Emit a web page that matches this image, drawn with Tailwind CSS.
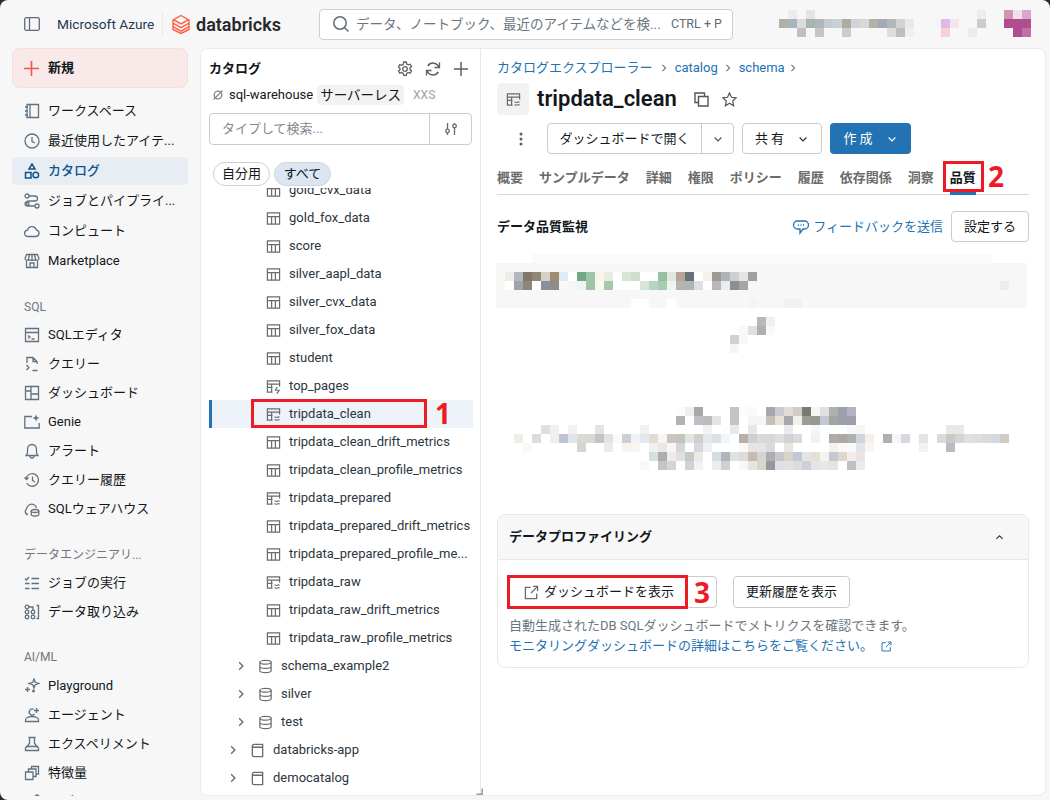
<!DOCTYPE html>
<html lang="ja">
<head>
<meta charset="UTF-8">
<title>tripdata_clean - Databricks</title>
<script src="https://cdn.jsdelivr.net/npm/@tailwindcss/browser@4"></script>
</head>
<body class="bg-[#2a2a2a] overflow-hidden font-['Roboto','Noto_Sans_CJK_JP',sans-serif] text-[13px] text-[#11171c]">
<svg class="hidden">
  <symbol id="tbl" viewBox="0 0 16 16"><path d="M1.500 2h13v12h-13zM1.500 6h13M6 6v8M10 6v8" fill="none" stroke="currentColor" stroke-width="1.300"/></symbol>
  <symbol id="mon" viewBox="0 0 16 16"><path d="M7 14H1.500V2h13v6M1.500 5.500h13M1.500 9H7M6 5.500V14" fill="none" stroke="currentColor" stroke-width="1.300"/><path d="M9 11c1-1 2 .8 3 0s1.500-.8 2.500 0M9 14c1-1 2 .8 3 0s1.500-.8 2.500 0" fill="none" stroke="currentColor" stroke-width="1.100"/></symbol>
  <symbol id="sch" viewBox="0 0 16 16"><ellipse cx="8" cy="3.500" rx="6" ry="2" fill="none" stroke="currentColor" stroke-width="1.300"/><path d="M2 3.500v9c0 1.100 2.700 2 6 2s6-.9 6-2v-9M2 8c0 1.100 2.700 2 6 2s6-.9 6-2" fill="none" stroke="currentColor" stroke-width="1.300"/></symbol>
  <symbol id="cat" viewBox="0 0 16 16"><path d="M2.500 3.500c0-1 .8-2 2-2h9v13h-9c-1.200 0-2-.8-2-2zM2.500 4.500h11" fill="none" stroke="currentColor" stroke-width="1.400"/></symbol>
  <symbol id="chev" viewBox="0 0 16 16"><path d="M5.500 3l5 5-5 5" fill="none" stroke="currentColor" stroke-width="1.800"/></symbol>
  <symbol id="down" viewBox="0 0 16 16"><path d="M3.500 6l4.500 4.500L12.500 6" fill="none" stroke="currentColor" stroke-width="1.600"/></symbol>
  <symbol id="ext" viewBox="0 0 16 16"><path d="M7 2.500H1.500v12h12V9M9.500 1.500h5v5M14.500 1.500L7.500 8.500" fill="none" stroke="currentColor" stroke-width="1.400"/></symbol>
</svg>

<div class="relative w-[1050px] h-[800px] bg-[#f7f7f7] rounded-t-[8px] rounded-bl-[8px] overflow-hidden">
  <!-- header -->
  <header class="h-12 flex items-center pl-6">
    <svg class="w-4 h-4 text-[#5f6b75]" viewBox="0 0 16 16" fill="none" stroke="currentColor" stroke-width="1.300"><rect x=".7" y="1.700" width="14.600" height="12.600" rx="1.500"/><path d="M5.500 1.700v12.600"/></svg>
    <span class="ml-[17px] w-[97px] text-[13.700px] text-[#1f3a52] whitespace-nowrap">Microsoft Azure</span>
    <div class="ml-2 w-px h-6 bg-[#e8e8e8]"></div>
    <svg class="ml-[9px] w-[18px] h-5" viewBox="0 0 18 20" fill="none" stroke="#ff5f46" stroke-width="1.400"><path d="M9 1.500l7.500 4.200L9 9.900 1.500 5.700zM1 9.200l8 4.500 8-4.500M1 12.700l8 4.500 8-4.500M1 6v9.500l8 4 8-4V6"/></svg>
    <span class="ml-[6px] w-[123px] text-[18px] font-semibold text-[#25282b]">databricks</span>
    <div class="w-[414px] h-[31px] bg-white border border-[#cfcfcf] rounded-[4px] flex items-center pl-3 pr-[10px]">
      <svg class="w-[18px] h-[18px] text-[#5f6b75]" viewBox="0 0 18 18" fill="none" stroke="currentColor" stroke-width="1.500"><circle cx="8" cy="8" r="6.200"/><path d="M12.500 12.500l4 4"/></svg>
      <span class="ml-[6px] text-[13.500px] text-[#6b7680]">データ、ノートブック、最近のアイテムなどを検...</span>
      <span class="ml-auto text-[12.500px] text-[#5f6b75]">CTRL + P</span>
    </div>
    <svg id="topBlur" class="ml-auto w-[271px] h-12" viewBox="0 0 271 48"></svg>
  </header>

  <div class="flex h-[748px]">
    <!-- sidebar -->
    <nav class="w-[200px] shrink-0 pl-3 pr-3 overflow-hidden">
      <div class="h-10 flex items-center gap-[9px] pl-[11px] bg-[#fae9e9] border border-[#f9dcdc] rounded-lg font-bold text-[13px]">
        <svg class="w-[15px] h-[15px]" viewBox="0 0 15 15" stroke="#f4534f" stroke-width="1.600"><path d="M7.500 0v15M0 7.500h15"/></svg>
        新規
      </div>
      <div class="mt-[9px] flex flex-col gap-[2px]">
        <a class="h-7 flex items-center gap-2 pl-3 rounded">
          <svg class="w-4 h-4 shrink-0 text-[#5f7281]" viewBox="0 0 16 16" fill="none" stroke="currentColor" stroke-width="1.300"><path d="M3 1.500h11.500v13H3zM6 1.500v13M1 4h3M1 8h3M1 12h3"/></svg>
          <span>ワークスペース</span>
        </a>
        <a class="h-7 flex items-center gap-2 pl-3 rounded">
          <svg class="w-4 h-4 shrink-0 text-[#5f7281]" viewBox="0 0 16 16" fill="none" stroke="currentColor" stroke-width="1.300"><circle cx="8" cy="8" r="7"/><path d="M8 4v4.500l3 1.500"/></svg>
          <span class="truncate">最近使用したアイテ...</span>
        </a>
        <a class="h-7 flex items-center gap-2 pl-3 rounded bg-[#e8edf4] text-[#0e538b] font-medium">
          <svg class="w-4 h-4 shrink-0" viewBox="0 0 16 16" fill="none" stroke="currentColor" stroke-width="1.500"><path d="M8 1l3 5H5zM1.500 9.500h5.500v5.500H1.500z"/><circle cx="11.800" cy="12" r="2.800"/></svg>
          <span>カタログ</span>
        </a>
        <a class="h-7 flex items-center gap-2 pl-3 rounded">
          <svg class="w-4 h-4 shrink-0 text-[#5f7281]" viewBox="0 0 16 16" fill="none" stroke="currentColor" stroke-width="1.300"><circle cx="3" cy="3" r="2"/><circle cx="13" cy="13" r="2"/><circle cx="3" cy="11" r="2"/><path d="M5 3h6a2.500 2.500 0 0 1 0 5H5a2.500 2.500 0 0 0 0 5h6"/></svg>
          <span class="truncate">ジョブとパイプライ...</span>
        </a>
        <a class="h-7 flex items-center gap-2 pl-3 rounded">
          <svg class="w-4 h-4 shrink-0 text-[#5f7281]" viewBox="0 0 16 16" fill="none" stroke="currentColor" stroke-width="1.300"><path d="M4 13.500a3.200 3.200 0 0 1-.4-6.400 4.500 4.500 0 0 1 8.700-.3 3.400 3.400 0 0 1-.3 6.700z"/></svg>
          <span>コンピュート</span>
        </a>
        <a class="h-7 flex items-center gap-2 pl-3 rounded">
          <svg class="w-4 h-4 shrink-0 text-[#5f7281]" viewBox="0 0 16 16" fill="none" stroke="currentColor" stroke-width="1.300"><path d="M2.500 1.500h11l1.500 4a2 2 0 0 1-3.500 1 2.300 2.300 0 0 1-3.500 0 2.300 2.300 0 0 1-3.500 0A2 2 0 0 1 1 5.500zM2.500 8v6.500h11V8M6 14.500V10h4v4.500M5.500 1.500L4.500 6M10.500 1.500l1 4.500M8 1.500V6"/></svg>
          <span>Marketplace</span>
        </a>
      </div>

      <div class="mt-[21px] h-[22px] flex items-center pl-3 text-[12px] text-[#6b7680]">SQL</div>
      <div class="mt-[3px] flex flex-col gap-px">
        <a class="h-7 flex items-center gap-2 pl-3">
          <svg class="w-4 h-4 shrink-0 text-[#5f7281]" viewBox="0 0 16 16" fill="none" stroke="currentColor" stroke-width="1.300"><path d="M1.500 1.500h13v13h-13zM1.500 5.500h13M4 8.500l2 1.500-2 1.500M7.500 12h3"/></svg>
          <span>SQLエディタ</span>
        </a>
        <a class="h-7 flex items-center gap-2 pl-3">
          <svg class="w-4 h-4 shrink-0 text-[#5f7281]" viewBox="0 0 16 16" fill="none" stroke="currentColor" stroke-width="1.300"><path d="M3 7V1.500h6l4 4V8M9 1.500v4h4M2.500 9l2.500 2.500L2.500 14M8.500 14.500h5"/></svg>
          <span>クエリー</span>
        </a>
        <a class="h-7 flex items-center gap-2 pl-3">
          <svg class="w-4 h-4 shrink-0 text-[#5f7281]" viewBox="0 0 16 16" fill="none" stroke="currentColor" stroke-width="1.300"><path d="M1.500 1.500h13v13h-13zM7 1.500v13M7 9h7.500M1.500 6h5.500"/></svg>
          <span>ダッシュボード</span>
        </a>
        <a class="h-7 flex items-center gap-2 pl-3">
          <svg class="w-4 h-4 shrink-0 text-[#5f7281]" viewBox="0 0 16 16" fill="none" stroke="currentColor" stroke-width="1.300"><path d="M8 2.500H.8v11.500h14.400V9"/><path d="M12 .5l1 2.500 2.500 1L13 5l-1 2.500L11 5 8.500 4 11 3z" fill="currentColor" stroke="none"/></svg>
          <span>Genie</span>
        </a>
        <a class="h-7 flex items-center gap-2 pl-3">
          <svg class="w-4 h-4 shrink-0 text-[#5f7281]" viewBox="0 0 16 16" fill="none" stroke="currentColor" stroke-width="1.300"><path d="M2 12.500h12l-1.500-2.500V6a4.500 4.500 0 0 0-9 0v4zM6 12.500v.5a2 2 0 0 0 4 0v-.5"/></svg>
          <span>アラート</span>
        </a>
        <a class="h-7 flex items-center gap-2 pl-3">
          <svg class="w-4 h-4 shrink-0 text-[#5f7281]" viewBox="0 0 16 16" fill="none" stroke="currentColor" stroke-width="1.300"><path d="M2.200 6a6.300 6.300 0 1 1 .5 5M.5 5.500l2 2 2-2M8.500 4.500v4l2.500 1.500"/></svg>
          <span>クエリー履歴</span>
        </a>
        <a class="h-7 flex items-center gap-2 pl-3">
          <svg class="w-4 h-4 shrink-0 text-[#5f7281]" viewBox="0 0 16 16" fill="none" stroke="currentColor" stroke-width="1.300"><path d="M4 13.500C1 13.500.5 10 2.500 8c.5-4 4.500-6 8-4 1.300.8 1.800 2 2 3"/><ellipse cx="11" cy="10" rx="3.800" ry="1.500"/><path d="M7.200 10v3.500c0 .8 1.700 1.500 3.800 1.500s3.800-.7 3.800-1.500V10"/></svg>
          <span>SQLウェアハウス</span>
        </a>
      </div>

      <div class="mt-[21px] h-[22px] flex items-center pl-3 text-[12px] text-[#6b7680]">データエンジニアリ...</div>
      <div class="mt-[3px] flex flex-col gap-px">
        <a class="h-7 flex items-center gap-2 pl-3">
          <svg class="w-4 h-4 shrink-0 text-[#5f7281]" viewBox="0 0 16 16" fill="none" stroke="currentColor" stroke-width="1.300"><path d="M1 3.500l1.500 1.500L5 2M7.500 3.500h7.500M1 8.500h4.500M7.500 8.500h7.500M1 13.500h4.500M7.500 13.500h7.500"/></svg>
          <span>ジョブの実行</span>
        </a>
        <a class="h-7 flex items-center gap-2 pl-3">
          <svg class="w-4 h-4 shrink-0 text-[#5f7281]" viewBox="0 0 16 16" fill="none" stroke="currentColor" stroke-width="1.300"><circle cx="3" cy="3" r="1.800"/><circle cx="3" cy="8" r="1.800"/><circle cx="3" cy="13" r="1.800"/><circle cx="9" cy="8" r="1.800"/><circle cx="9" cy="13" r="1.800"/><path d="M5 3h4v3M12.500 1.500h2v13h-2"/></svg>
          <span>データ取り込み</span>
        </a>
      </div>

      <div class="mt-[20px] h-[22px] flex items-center pl-3 text-[12px] text-[#6b7680]">AI/ML</div>
      <div class="mt-[4px] flex flex-col gap-px">
        <a class="h-7 flex items-center gap-2 pl-3">
          <svg class="w-4 h-4 shrink-0 text-[#5f7281]" viewBox="0 0 16 16" fill="none" stroke="currentColor" stroke-width="1.300"><path d="M10 1l1.200 3.300L15 5.500l-3.800 1.200L10 10 8.800 6.700 5 5.500l3.800-1.200z"/><path d="M3.500 9v5M1 11.500h5M8 13h3M9.500 11.500v3"/></svg>
          <span>Playground</span>
        </a>
        <a class="h-7 flex items-center gap-2 pl-3">
          <svg class="w-4 h-4 shrink-0 text-[#5f7281]" viewBox="0 0 16 16" fill="none" stroke="currentColor" stroke-width="1.300"><path d="M1.500 14.500v-1.500c0-2 3-3.500 6.500-3.500s6.500 1.500 6.500 3.500v1.500zM9.500 2.300A3 3 0 1 0 10.500 7"/><path d="M12.500 1v5M10 3.500h5"/></svg>
          <span>エージェント</span>
        </a>
        <a class="h-7 flex items-center gap-2 pl-3">
          <svg class="w-4 h-4 shrink-0 text-[#5f7281]" viewBox="0 0 16 16" fill="none" stroke="currentColor" stroke-width="1.300"><path d="M4.500 1.500h7M5.500 1.500v6L1.500 12v2.500h13V12l-4-4.500v-6M3 10.500h10"/></svg>
          <span>エクスペリメント</span>
        </a>
        <a class="h-7 flex items-center gap-2 pl-3">
          <svg class="w-4 h-4 shrink-0 text-[#5f7281]" viewBox="0 0 16 16" fill="none" stroke="currentColor" stroke-width="1.300"><path d="M1.500 7h7.500v7.500H1.500zM4.500 7V4h7.500v7.500H9M7.500 4V1.500h7V9H12"/></svg>
          <span>特徴量</span>
        </a>
        <a class="h-7 flex items-center gap-2 pl-3">
          <svg class="w-4 h-4 shrink-0 text-[#5f7281]" viewBox="0 0 16 16" fill="none" stroke="currentColor" stroke-width="1.300"><circle cx="3" cy="8" r="2"/><circle cx="13" cy="3" r="2"/><circle cx="13" cy="13" r="2"/><path d="M5 7l6-3M5 9l6 3"/></svg>
          <span>モデル</span>
        </a>
      </div>
    </nav>

    <!-- panel -->
    <div class="w-[846px] h-[748px] bg-white border border-[#ebebeb] rounded-lg flex overflow-hidden relative">
      <!-- catalog tree -->
      <section class="w-[280px] shrink-0 border-r border-[#e8e8e8] flex flex-col">
        <div class="px-2 pt-[6px] h-[27px] flex items-center justify-between box-content">
          <h2 class="font-bold text-[13px]">カタログ</h2>
          <div class="flex items-center gap-[12px] pr-[3px] text-[#5f5f5f]">
            <svg class="w-4 h-4" viewBox="0 0 16 16" fill="none" stroke="currentColor" stroke-width="1.300"><circle cx="8" cy="8" r="2.300"/><path d="M6.700 1h2.600l.4 2 1.600.9 1.900-.7 1.300 2.300-1.500 1.300v1.800l1.500 1.300-1.300 2.300-1.900-.7-1.600.9-.4 2H6.700l-.4-2-1.600-.9-1.900.7-1.300-2.300 1.500-1.300V7.200L1.500 5.900l1.300-2.300 1.900.7 1.600-.9z"/></svg>
            <svg class="w-4 h-4" viewBox="0 0 16 16" fill="none" stroke="currentColor" stroke-width="1.500"><path d="M14 6.500A6.200 6.200 0 0 0 2.800 5M2 9.500A6.200 6.200 0 0 0 13.200 11"/><path d="M14.500 1.500v5h-5M1.500 14.500v-5h5" stroke-width="1.300"/></svg>
            <svg class="w-4 h-4" viewBox="0 0 16 16" stroke="currentColor" stroke-width="1.500"><path d="M8 1v14M1 8h14"/></svg>
          </div>
        </div>
        <div class="mt-[3px] pl-3 h-[20px] flex items-center text-[13px]">
          <svg class="w-[10px] h-[10px] text-[#7b8690]" viewBox="0 0 10 10" fill="none" stroke="currentColor" stroke-width="1.300"><circle cx="5" cy="5" r="3.800"/><path d="M.5 9.500l9-9"/></svg>
          <span class="ml-[6px]">sql-warehouse</span>
          <span class="ml-1 h-5 px-[3px] flex items-center bg-[#f2f2f2] rounded text-[13.500px]">サーバーレス</span>
          <span class="ml-[9px] text-[12px] text-[#9aa3aa]">XXS</span>
        </div>
        <div class="mt-2 mx-2 h-8 border border-[#cbcbcb] rounded-[4px] flex items-center">
          <span class="pl-3 flex-1 text-[13px] text-[#7f8a93]">タイプして検索...</span>
          <div class="w-[42px] h-full border-l border-[#cbcbcb] flex items-center justify-center">
            <svg class="w-[14px] h-[14px] text-[#5f6b75]" viewBox="0 0 14 14" fill="none" stroke="currentColor" stroke-width="1.300"><path d="M3.500 1v6M3.500 11v2M10.500 1v1M10.500 6v7"/><circle cx="3.500" cy="9" r="1.800"/><circle cx="10.500" cy="4" r="1.800"/></svg>
          </div>
        </div>
        <div class="mt-[17px] pl-3 flex gap-1">
          <span class="w-[57px] h-6 flex items-center justify-center border border-[#cfcfcf] rounded-full">自分用</span>
          <span class="w-[57px] h-6 flex items-center justify-center border border-[#cfd6de] bg-[#dbe6f2] rounded-full">すべて</span>
        </div>
        <div class="mt-[2px] flex-1 overflow-hidden text-[#2c3640]">
          <div class="mt-[-12px] [&_svg]:shrink-0">
            <div class="h-7 flex items-center pl-[65px] gap-2"><svg class="w-[15px] h-[15px] text-[#6b6b6b]"><use href="#tbl"/></svg>gold_cvx_data</div>
            <div class="h-7 flex items-center pl-[65px] gap-2"><svg class="w-[15px] h-[15px] text-[#6b6b6b]"><use href="#tbl"/></svg>gold_fox_data</div>
            <div class="h-7 flex items-center pl-[65px] gap-2"><svg class="w-[15px] h-[15px] text-[#6b6b6b]"><use href="#tbl"/></svg>score</div>
            <div class="h-7 flex items-center pl-[65px] gap-2"><svg class="w-[15px] h-[15px] text-[#6b6b6b]"><use href="#tbl"/></svg>silver_aapl_data</div>
            <div class="h-7 flex items-center pl-[65px] gap-2"><svg class="w-[15px] h-[15px] text-[#6b6b6b]"><use href="#tbl"/></svg>silver_cvx_data</div>
            <div class="h-7 flex items-center pl-[65px] gap-2"><svg class="w-[15px] h-[15px] text-[#6b6b6b]"><use href="#tbl"/></svg>silver_fox_data</div>
            <div class="h-7 flex items-center pl-[65px] gap-2"><svg class="w-[15px] h-[15px] text-[#6b6b6b]"><use href="#tbl"/></svg>student</div>
            <div class="h-7 flex items-center pl-[65px] gap-2"><svg class="w-[15px] h-[15px] text-[#6b6b6b]" viewBox="0 0 16 16" fill="none" stroke="currentColor" stroke-width="1.300"><path d="M7 14H1.500V2h13v6M1.500 5.500h13M1.500 9H7M6 5.500V14M12 8.500L10 12h4l-2.500 3.500"/></svg>top_pages</div>
            <div class="h-7 ml-2 mr-[7px] bg-[#eef3f9] border-l-[3px] border-[#2272b4] flex items-center pl-[54px] gap-2"><svg class="w-[15px] h-[15px] text-[#6b6b6b]"><use href="#mon"/></svg>tripdata_clean</div>
            <div class="h-7 flex items-center pl-[65px] gap-2"><svg class="w-[15px] h-[15px] text-[#6b6b6b]"><use href="#tbl"/></svg>tripdata_clean_drift_metrics</div>
            <div class="h-7 flex items-center pl-[65px] gap-2"><svg class="w-[15px] h-[15px] text-[#6b6b6b]"><use href="#tbl"/></svg>tripdata_clean_profile_metrics</div>
            <div class="h-7 flex items-center pl-[65px] gap-2"><svg class="w-[15px] h-[15px] text-[#6b6b6b]"><use href="#mon"/></svg>tripdata_prepared</div>
            <div class="h-7 flex items-center pl-[65px] gap-2"><svg class="w-[15px] h-[15px] text-[#6b6b6b]"><use href="#tbl"/></svg>tripdata_prepared_drift_metrics</div>
            <div class="h-7 flex items-center pl-[65px] gap-2"><svg class="w-[15px] h-[15px] text-[#6b6b6b]"><use href="#tbl"/></svg>tripdata_prepared_profile_me...</div>
            <div class="h-7 flex items-center pl-[65px] gap-2"><svg class="w-[15px] h-[15px] text-[#6b6b6b]"><use href="#mon"/></svg>tripdata_raw</div>
            <div class="h-7 flex items-center pl-[65px] gap-2"><svg class="w-[15px] h-[15px] text-[#6b6b6b]"><use href="#tbl"/></svg>tripdata_raw_drift_metrics</div>
            <div class="h-7 flex items-center pl-[65px] gap-2"><svg class="w-[15px] h-[15px] text-[#6b6b6b]"><use href="#tbl"/></svg>tripdata_raw_profile_metrics</div>
            <div class="h-7 flex items-center pl-[34px]"><svg class="w-3 h-3 text-[#6b6b6b]"><use href="#chev"/></svg><svg class="ml-[11px] w-[15px] h-[15px] text-[#6b6b6b]"><use href="#sch"/></svg><span class="ml-2">schema_example2</span></div>
            <div class="h-7 flex items-center pl-[34px]"><svg class="w-3 h-3 text-[#6b6b6b]"><use href="#chev"/></svg><svg class="ml-[11px] w-[15px] h-[15px] text-[#6b6b6b]"><use href="#sch"/></svg><span class="ml-2">silver</span></div>
            <div class="h-7 flex items-center pl-[34px]"><svg class="w-3 h-3 text-[#6b6b6b]"><use href="#chev"/></svg><svg class="ml-[11px] w-[15px] h-[15px] text-[#6b6b6b]"><use href="#sch"/></svg><span class="ml-2">test</span></div>
            <div class="h-7 flex items-center pl-[26px]"><svg class="w-3 h-3 text-[#6b6b6b]"><use href="#chev"/></svg><svg class="ml-[11px] w-[15px] h-[15px] text-[#6b6b6b]"><use href="#cat"/></svg><span class="ml-2">databricks-app</span></div>
            <div class="h-7 flex items-center pl-[26px]"><svg class="w-3 h-3 text-[#6b6b6b]"><use href="#chev"/></svg><svg class="ml-[11px] w-[15px] h-[15px] text-[#6b6b6b]"><use href="#cat"/></svg><span class="ml-2">democatalog</span></div>
          </div>
        </div>
      </section>

      <!-- detail -->
      <main class="flex-1 px-4 pt-[9px] min-w-0">
        <div class="h-5 flex items-center text-[13px] text-[#2272b4]">
          カタログエクスプローラー
          <svg class="mx-[6px] w-[10px] h-[10px] text-[#6b7680]"><use href="#chev"/></svg><span class="w-[42px] whitespace-nowrap">catalog</span>
          <svg class="mx-[6px] w-[10px] h-[10px] text-[#6b7680]"><use href="#chev"/></svg><span class="w-[43px] whitespace-nowrap">schema</span>
          <svg class="ml-[6px] w-[10px] h-[10px] text-[#6b7680]"><use href="#chev"/></svg>
        </div>
        <div class="mt-[5px] h-8 flex items-center">
          <div class="w-8 h-8 bg-[#f2f2f2] rounded flex items-center justify-center"><svg class="w-[15px] h-[15px] text-[#6b6b6b]"><use href="#mon"/></svg></div>
          <h1 class="ml-2 text-[22px] font-semibold leading-none">tripdata_clean</h1>
          <svg class="ml-[17px] w-[15px] h-[15px] text-[#555]" viewBox="0 0 15 15" fill="none" stroke="currentColor" stroke-width="1.400"><path d="M4.500 4.500h9.500v9.500H4.500zM4.500 10.500H1V1h9.500v3.500"/></svg>
          <svg class="ml-[13px] w-[15px] h-[15px] text-[#555]" viewBox="0 0 16 16" fill="none" stroke="currentColor" stroke-width="1.300"><path d="M8 1l2.100 4.600 5 .6-3.700 3.400 1 5L8 11.900l-4.400 2.700 1-5L.9 6.200l5-.6z"/></svg>
        </div>
        <div class="mt-[8px] h-[31px] flex items-center">
          <svg class="ml-[22px] w-1 h-[14px] text-[#5f5f5f]" viewBox="0 0 4 14" fill="currentColor"><circle cx="2" cy="2" r="1.500"/><circle cx="2" cy="7" r="1.500"/><circle cx="2" cy="12" r="1.500"/></svg>
          <div class="ml-6 w-[187px] h-full border border-[#cbcbcb] rounded-[4px] flex">
            <span class="flex-1 flex items-center justify-center">ダッシュボードで開く</span>
            <span class="w-[32px] border-l border-[#cbcbcb] flex items-center justify-center"><svg class="w-3 h-3 text-[#555]"><use href="#down"/></svg></span>
          </div>
          <div class="ml-2 w-[80px] h-full border border-[#cbcbcb] rounded-[4px] flex items-center justify-center gap-[13px]">
            共 有<svg class="w-3 h-3 text-[#333]"><use href="#down"/></svg>
          </div>
          <div class="ml-2 w-[81px] h-full bg-[#2272b4] text-white rounded-[4px] flex items-center justify-center gap-[13px]">
            作 成<svg class="w-3 h-3"><use href="#down"/></svg>
          </div>
        </div>
        <div class="mt-[9px] h-[32px] border-b border-[#d8d8d8] flex gap-4 text-[13px] font-semibold text-[#6b6b6b]">
          <span class="pt-[5px]">概要</span>
          <span class="pt-[5px]">サンプルデータ</span>
          <span class="pt-[5px]">詳細</span>
          <span class="pt-[5px]">権限</span>
          <span class="pt-[5px]">ポリシー</span>
          <span class="pt-[5px]">履歴</span>
          <span class="pt-[5px]">依存関係</span>
          <span class="pt-[5px]">洞察</span>
          <span class="pt-[5px] h-[32px] border-b-[3px] border-[#2272b4] text-[#11171c]">品質</span>
        </div>
        <div class="mt-4 h-[31px] flex items-center">
          <span class="font-bold">データ品質監視</span>
          <svg class="ml-auto w-4 h-4 text-[#2272b4]" viewBox="0 0 16 16" fill="none" stroke="currentColor" stroke-width="1.300"><path d="M4.500 2h7a3.800 3.800 0 0 1 0 8H10l-3 4v-4H4.500a3.800 3.800 0 0 1 0-8z"/><path d="M5 6h1M7.500 6h1M10 6h1"/></svg>
          <span class="ml-1 text-[#2272b4]">フィードバックを送信</span>
          <span class="ml-2 w-[78px] h-full border border-[#cbcbcb] rounded-[4px] flex items-center justify-center">設定する</span>
        </div>
        <svg id="blur" class="block ml-[-1px] mt-2 w-[552px] h-[264px]" viewBox="0 0 552 264"></svg>
        <div class="w-[532px] h-[154px] border border-[#e8e8e8] rounded-lg overflow-hidden">
          <div class="h-[45px] px-[11px] bg-[#f7f7f7] border-b border-[#e8e8e8] flex items-center justify-between">
            <span class="font-bold">データプロファイリング</span>
            <svg class="mr-[12px] w-[11px] h-[11px] rotate-180 text-[#333]"><use href="#down"/></svg>
          </div>
          <div class="px-[11px] pt-4">
            <div class="flex gap-4">
              <span class="w-[208px] h-8 pl-[14px] border border-[#cbcbcb] rounded-[4px] flex items-center"><svg class="w-[15px] h-[15px] text-[#6b6b6b]"><use href="#ext"/></svg><span class="ml-[5px]">ダッシュボードを表示</span></span>
              <span class="w-[117px] h-8 border border-[#cbcbcb] rounded-[4px] flex items-center justify-center">更新履歴を表示</span>
            </div>
            <p class="mt-2 text-[13px] leading-5 text-[#6b7680]">自動生成されたDB SQLダッシュボードでメトリクスを確認できます。</p>
            <p class="text-[13px] leading-5 text-[#2272b4] flex items-center">モニタリングダッシュボードの詳細はこちらをご覧ください。<svg class="ml-2 w-[11px] h-[11px]"><use href="#ext"/></svg></p>
          </div>
        </div>
      </main>
      <svg class="absolute right-[562px] bottom-0 w-[7px] h-[7px] text-[#9a9a9a]" viewBox="0 0 7 7" fill="none" stroke="currentColor" stroke-width="1.500"><path d="M.5 6.200h5.700V.5"/></svg>
    </div>
  </div>

  <!-- annotations -->
  <div class="absolute left-[251px] top-[399px] w-[176px] h-[29px] border-[3px] border-[#ed1c24]"></div>
  <span class="absolute left-[435px] top-[396px] font-['Noto_Sans'] text-[28px] leading-[34px] font-bold text-[#ed1c24]">1</span>
  <div class="absolute left-[943px] top-[161px] w-[41px] h-[31px] border-[3px] border-[#ed1c24]"></div>
  <span class="absolute left-[988px] top-[159px] font-['Noto_Sans'] text-[28px] leading-[34px] font-bold text-[#ed1c24]">2</span>
  <div class="absolute left-[507px] top-[575px] w-[181px] h-[34px] border-[3px] border-[#ed1c24]"></div>
  <span class="absolute left-[694px] top-[575px] font-['Noto_Sans'] text-[28px] leading-[34px] font-bold text-[#ed1c24]">3</span>
</div>

<script>
// pixelated (redacted) areas of the screenshot: row -> "col:colour"
const paint = (svg, x0, y0, cell, rows) => {
  let out = '';
  rows.forEach(([y, cells]) => {
    cells.split(' ').forEach(c => {
      const [k, col] = c.split(':');
      out += `<rect x="${x0 + k * cell}" y="${y0 + y * cell}" width="${cell}" height="${cell}" fill="#${col}"/>`;
    });
  });
  svg.insertAdjacentHTML('beforeend', out);
};
const mainBlur = document.getElementById('blur');
mainBlur.innerHTML = '<rect x="0" y="13" width="531" height="45" fill="#f7f7f7"/><rect x="36" y="4" width="460" height="9" fill="#fafafa"/>';
paint(mainBlur, 0, 4, 9, [
  [2, '1:f0ebe5 2:b0b8c0 3:7d7868 4:928678 5:d5d0c8 6:a08c70 7:e0eaf5 8:fff 9:70a880 10:a0c4a8 11:f8f5ea 12:e5ebe5 13:fff 14:d8e4d8 15:d0dccc 16:fff 17:fff 18:98bfa4 19:e0e8e0 20:b5a595 21:687078 22:fff 23:f5f0e8 24:9c9c94 25:b0b4b4 26:ccd0d4 27:e4e4e4 28:a0a0a4'],
  [3, '1:fff 2:a0a4a8 3:8c8878 4:fff 5:8890a0 6:908c84 7:f8f8f8 8:f4f6f6 9:f0f4f2 10:a0c4a8 11:f8f8f0 12:a8c8ac 13:fff 14:fff 15:fff 16:d8e4d4 17:b8d4c8 18:a8ccb0 19:f0f4f0 20:b8b4ac 21:b0b4b4 22:dce0e4 23:fff 24:b8b8b8 25:e8eeec 26:889090 27:a8a4a4 56:ececec'],
  [5, '15:fff 16:fff 19:fff 28:f4f4f4 32:f1f1f1 33:f1f1f1'],
  [7, '29:b8b8b8 30:f0f0f0'],
  [8, '27:f8f8f8 28:e0e0e0 29:b0b0b0 30:fafafa'],
  [9, '26:d0d0d0 27:f8f8f8'],
  [10, '26:f5f5f5'],
  [17, '20:fafcfc 21:f0eeec 22:a8a8a8 26:c4c4c4 27:fcfcfc 28:fafafa 30:a8a8ac 31:c8ccd4 32:e0dcd4 33:d0ccc8 34:787874 35:f8f4ee 36:e0e0e0 37:b0b0ac 38:9ca0a8 39:b0b4c0'],
  [18, '20:b0b4b8 22:bcc0c4 23:bcbcc0 24:e4e4e4 26:c4c4c4 28:f4f4f4 29:f4f6f6 30:c4c0bc 31:e8e0d4 32:a8a8ac 33:f0f0ec 34:9c9c94 35:989890 36:c4c8d0 37:a4a4a4 38:9ca0a8 39:9ca0a8'],
  [19, '5:e0e0d8 6:eef2ee 8:f4f2f0 11:e4e4e4 16:f4f0ec 23:f0f2f4 26:e8e8e6 28:e4e8ec 32:e8ecf0 35:f4f6f8 39:f8f8f8 40:f6f6f6 50:e8e8e8 51:e8e8e8'],
  [20, '2:f0ece6 4:dcdcdc 6:eef0ec 7:bcc4d4 8:e0e4ec 9:dcd8d4 10:d8d8d6 11:c4c4c8 12:e0e4e8 13:f8fafc 14:ccd0d4 15:f0f2f6 16:e4e8ec 17:e0dcd4 18:f8f6f2 19:ccc4c0 20:c4c4bc 21:e0e4e4 22:d4cec8 23:e4e8ee 24:dce0e4 25:f0f6fa 27:b8b0a8 28:ccd0d4 29:dcd8d4 30:d4d8d8 31:dcdedf 32:d0d2d4 33:d8dadc 35:f4f2ee 37:b0aca8 38:aca8a4 39:b0b0b0 40:d0d4dc 41:f8f0e8 43:b0b0b0 44:f4f6f8 45:d8d8e0 47:e4e4e2 49:d8dadc 50:ccc8c8 51:d8d4d0 52:e0e0e0 53:e0dedd 54:dcdad6 55:d4d8e0 56:d0ccc4'],
  [21, '3:f6f8fc 9:d4d4d4 12:ecece6 14:f4f4f4 15:fcf4ee 17:f0f0f0 18:e8e8e8 19:fcf4ee 20:d4d4dc 22:d4d8e0 23:eef0f6 27:f8f8f8 28:e8e4e2 29:e4e4e6 30:dcd8dc 32:e8e4e0 37:f8f0ee 38:fcf8f4 39:f8fafa 40:e4e4e6 41:f4f6f8 47:f0f2f6 50:b8bcc4'],
  [22, '17:d4e0dc 18:b0acac 19:ecebe8 20:e0e0e0 21:c4c8c8 22:ece8e4 24:d4dce4 25:b0b4bc 26:e0e0e0 27:dcdcdc 28:c4bcb4 29:d4d4d0 30:aeaeae 31:c4c8c8 32:d8d4cc 33:c4c8d4 34:e4e6e6 35:e4e0d4 36:f4f4ee 37:c4c8d0 38:dcd8d0 39:f0eeec 40:ece4e0'],
  [23, '16:f8f8f8 18:c4c4c4 19:d4d4d8 21:ccd4d8 22:f0f2f6 24:ececec 25:ccd0d0 27:f8f8f8 28:e8e4dc 29:d8d4d0 30:989898 31:dce0e8 32:e0e2e8 33:dcdcdc 34:ccd0d8 35:e8e4e4 36:e8e8ea 37:e4e4e4 39:c0c0c0 40:e8ecf2']
]);
paint(document.getElementById('topBlur'), 0, 10, 9, [
  [0, '1:ececec 3:e4e4e4 22:ececec 25:d094b8 26:f0e0ea 27:d8a8c8'],
  [1, '0:b4b0a8 1:a8b4bc 2:dcdcdc 3:a8b4b4 4:acb8bc 5:c4ccd0 6:c8d0d8 7:acaca0 8:d0d4d8 9:d8d8d8 10:b0b4a8 11:a4a8b8 12:b0b8bc 13:d0d4cc 14:e8e8e8 17:f4f4fa 18:e0b8e8 19:f4e4ec 22:cccccc 25:b04c90 26:b04c90 27:b04c90'],
  [2, '2:c0c0c0 4:c8c4c0 7:cccccc 12:e0dcd8 13:c0bcc0 14:f0f0f0 18:f8d0d4 21:ececec 26:b04c90 27:c070a8']
]);
</script>
</body>
</html>
